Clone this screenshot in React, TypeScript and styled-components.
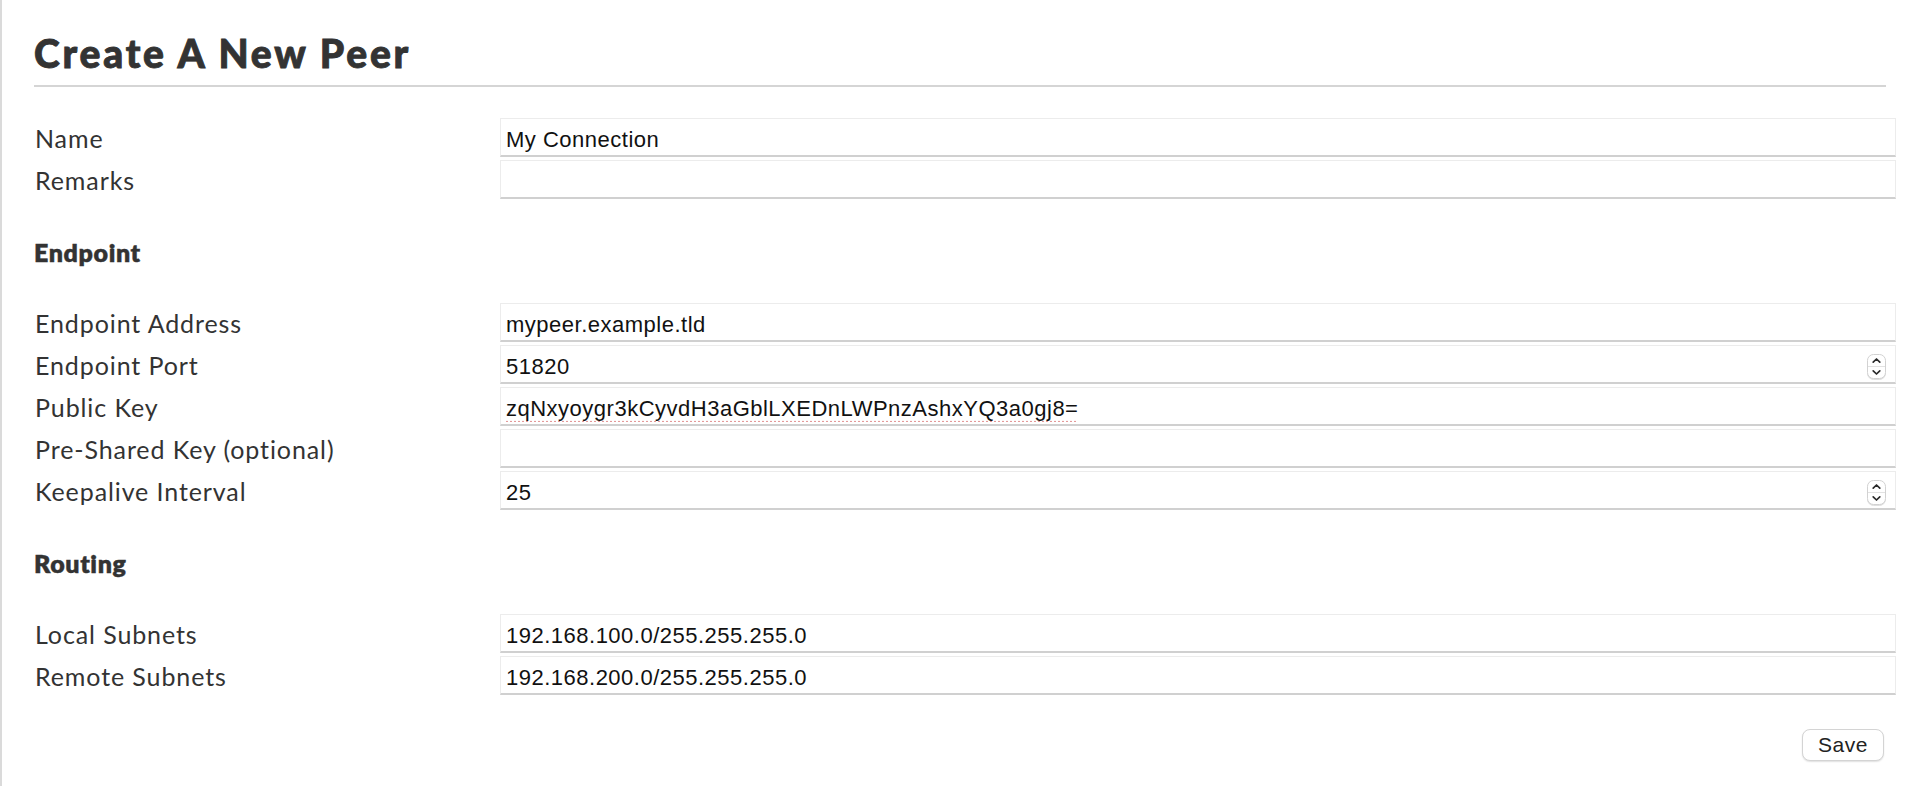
import { InputHTMLAttributes } from "react";
import styled, { createGlobalStyle } from "styled-components";

// Types -------------------------------------------------------------------------

interface FieldProps {
  label: string;
  value?: string;
  type?: "text" | "number";
  typo?: boolean;
}

// Component ---------------------------------------------------------------------

const Spinner = () => (
  <SpinnerBox viewBox="0 0 19 25" width={19} height={25}>
    <rect x="0.5" y="0.5" width="18" height="24" rx="6" fill="#fff" stroke="#d2d2d2" />
    <line x1="1" y1="12.5" x2="18" y2="12.5" stroke="#e2e2e2" />
    <path d="M6.2 8.2 L9.5 5 L12.8 8.2" fill="none" stroke="#2a2a2a" strokeWidth="1.7" strokeLinecap="round" strokeLinejoin="round" />
    <path d="M6.2 16.8 L9.5 20 L12.8 16.8" fill="none" stroke="#2a2a2a" strokeWidth="1.7" strokeLinecap="round" strokeLinejoin="round" />
  </SpinnerBox>
);

const Field = ({ label, value = "", type = "text", typo }: FieldProps) => {
  const inputProps: InputHTMLAttributes<HTMLInputElement> = {
    type,
    defaultValue: value,
    spellCheck: false,
    autoComplete: "off",
  };

  return (
    <Row>
      <Label>{label}</Label>
      <InputWrap>
        <Input {...inputProps} $typo={typo} />
        {type === "number" && <Spinner />}
      </InputWrap>
    </Row>
  );
};

const App = () => {
  return (
    <>
      <GlobalStyle />
      <Page>
        <Title>Create A New Peer</Title>
        <Form onSubmit={(e) => e.preventDefault()}>
          <Field label="Name" value="My Connection" />
          <Field label="Remarks" />

          <Section>Endpoint</Section>
          <Field label="Endpoint Address" value="mypeer.example.tld" />
          <Field label="Endpoint Port" value="51820" type="number" />
          <Field
            label="Public Key"
            value="zqNxyoygr3kCyvdH3aGblLXEDnLWPnzAshxYQ3a0gj8="
            typo
          />
          <Field label="Pre-Shared Key (optional)" />
          <Field label="Keepalive Interval" value="25" type="number" />

          <Section>Routing</Section>
          <Field label="Local Subnets" value="192.168.100.0/255.255.255.0" />
          <Field label="Remote Subnets" value="192.168.200.0/255.255.255.0" />

          <Actions>
            <SaveButton type="submit">Save</SaveButton>
          </Actions>
        </Form>
      </Page>
    </>
  );
};

export default App;

// Styled ------------------------------------------------------------------------

const GlobalStyle = createGlobalStyle`
  html, body {
    margin: 0;
    background: #fff;
  }

  * {
    box-sizing: border-box;
  }
`;

const Page = styled.div`
  min-height: 100vh;
  border-left: 2px solid #dadada;
  padding: 32px 18px 20px 32px;
  font-family: Lato, "Noto Sans", sans-serif;
  color: #333;
`;

const Title = styled.h1`
  margin: 0 10px 0 0;
  padding-bottom: 11px;
  border-bottom: 2px solid #d5d5d5;
  font-size: 39px;
  line-height: 42px;
  font-weight: 900;
  letter-spacing: 2.8px;
  color: #333;
  -webkit-text-stroke: 0.9px #333;
`;

const Form = styled.form`
  margin-top: 31px;
`;

const Row = styled.div`
  display: grid;
  grid-template-columns: 466px 1fr;
  align-items: center;
  margin-bottom: 3px;
`;

const Label = styled.label`
  padding-left: 1px;
  font-size: 25px;
  line-height: 30px;
  letter-spacing: 0.9px;
  color: #333;
`;

const Section = styled.h3`
  margin: 38px 0 36px;
  font-size: 25px;
  line-height: 30px;
  font-weight: 800;
  letter-spacing: 0.6px;
  color: #333;
  -webkit-text-stroke: 0.4px #333;
`;

const InputWrap = styled.div`
  position: relative;
  display: flex;
`;

const Input = styled.input<{ $typo?: boolean }>`
  width: 100%;
  height: 39px;
  padding: 6px 5px 0;
  border: 1px solid #ececec;
  border-bottom: 2px solid #d0d0d0;
  border-radius: 0;
  outline: none;
  background: #fff;
  font-family: "Liberation Sans", Arial, sans-serif;
  font-size: 22px;
  letter-spacing: 0.5px;
  color: #111;
  text-decoration: ${({ $typo }) => ($typo ? "underline dotted #e39a9a" : "none")};
  text-underline-offset: 5px;

  &::-webkit-inner-spin-button,
  &::-webkit-outer-spin-button {
    -webkit-appearance: none;
    margin: 0;
  }
`;

const SpinnerBox = styled.svg`
  position: absolute;
  right: 10px;
  top: 9px;
  filter: drop-shadow(0 1px 0.5px rgba(0, 0, 0, 0.12));
  pointer-events: none;
`;

const Actions = styled.div`
  display: flex;
  justify-content: flex-end;
  margin-top: 34px;
  padding-right: 12px;
`;

const SaveButton = styled.button`
  width: 82px;
  height: 32px;
  padding: 0;
  border: 1px solid #d4d4d4;
  border-radius: 8px;
  background: #fff;
  box-shadow: 0 1px 1.5px rgba(0, 0, 0, 0.12);
  font-family: "Liberation Sans", Arial, sans-serif;
  font-size: 21px;
  letter-spacing: 0.5px;
  color: #222;
  cursor: pointer;
`;
